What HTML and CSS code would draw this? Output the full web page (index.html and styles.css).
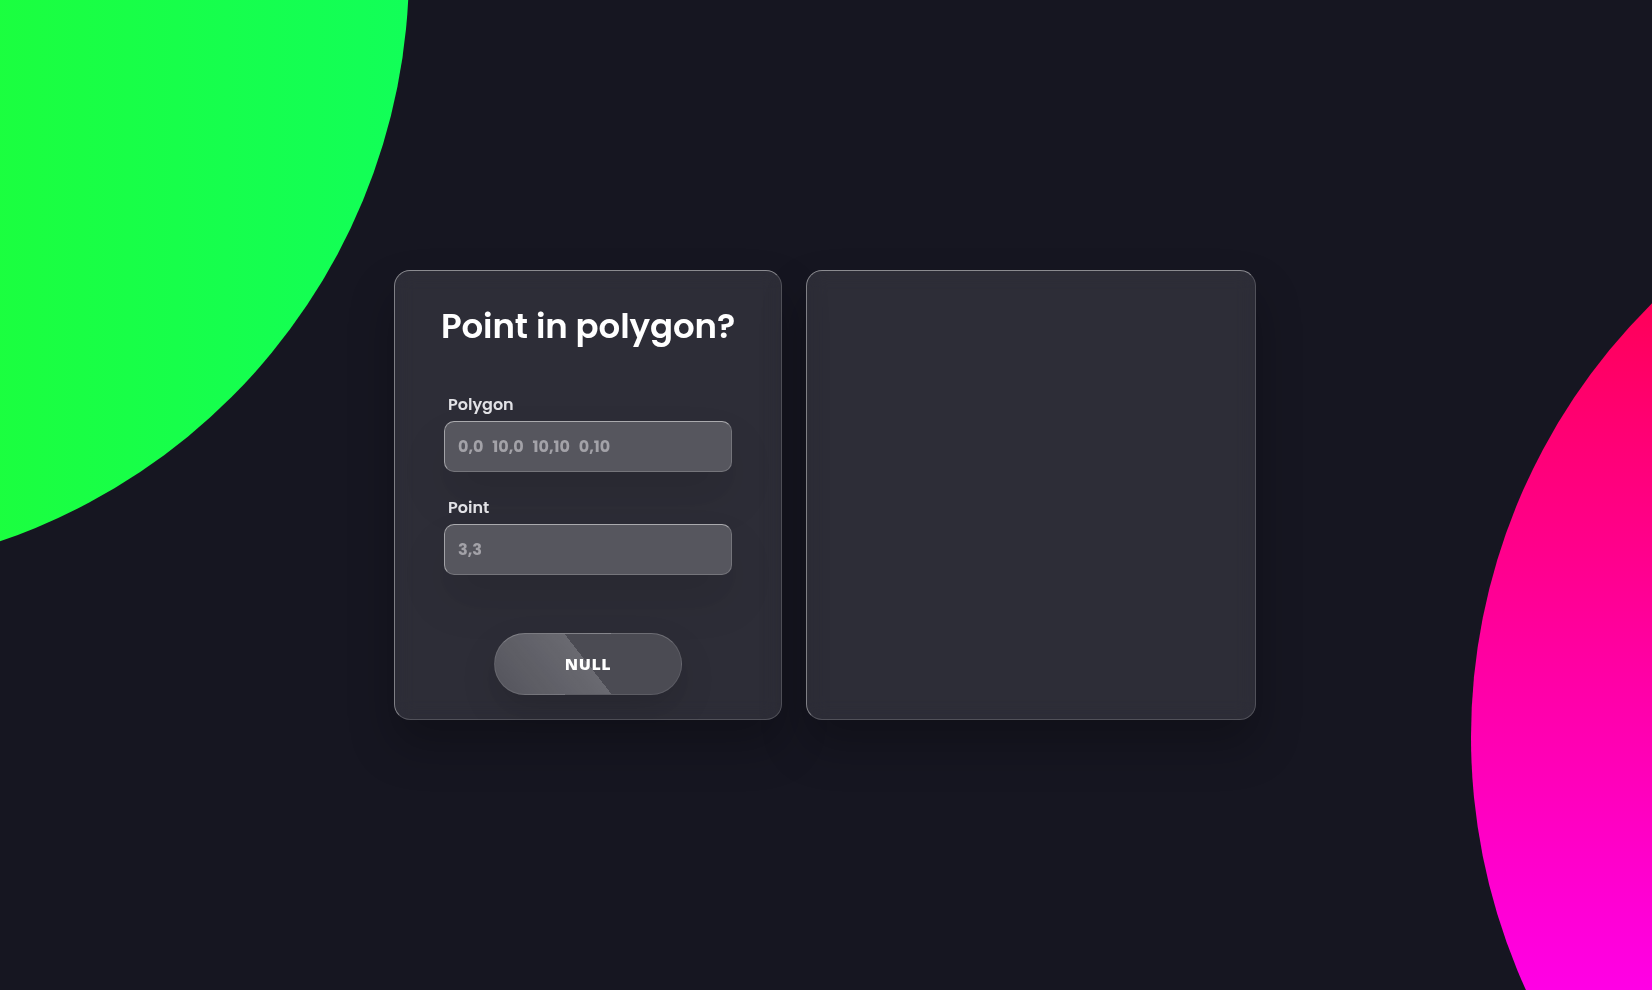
FILE: index.html
```html
<!DOCTYPE html>
<html lang="en">
<head>
<meta charset="utf-8">
<title>Point in polygon?</title>
<link rel="stylesheet" href="styles.css">
</head>
<body>
<div class="blob blob-green"></div>
<div class="blob blob-pink"></div>
<main class="stage">
  <section class="card form-card">
    <h1 class="title">Point in polygon?</h1>
    <div class="field">
      <label class="label" for="polygon">Polygon</label>
      <input class="input" id="polygon" type="text" placeholder="0,0  10,0  10,10  0,10">
    </div>
    <div class="field">
      <label class="label" for="point">Point</label>
      <input class="input" id="point" type="text" placeholder="3,3">
    </div>
    <button class="btn" type="button">NULL</button>
  </section>
  <section class="card canvas-card"></section>
</main>
</body>
</html>
```

FILE: styles.css
```css
* { box-sizing: border-box; }

html, body {
  margin: 0;
  height: 100%;
}

body {
  background: #161621;
  font-family: "Poppins", "Inter", "Noto Sans", sans-serif;
  overflow: hidden;
  position: relative;
  display: flex;
  align-items: center;
  justify-content: center;
}

.blob {
  position: absolute;
  border-radius: 50%;
  z-index: 0;
}

.blob-green {
  width: 1210px;
  height: 1210px;
  left: -801px;
  top: -636px;
  background: linear-gradient(to right, #2cff0f, #12ff58);
}

.blob-pink {
  width: 1220px;
  height: 1220px;
  left: 1471px;
  top: 127px;
  background: linear-gradient(to bottom, #ff0035 0%, #ff00ff 81%, #ff00ff 100%);
}

.stage {
  position: relative;
  z-index: 1;
  display: flex;
  gap: 24px;
  margin-left: -2px;
}

.card {
  height: 450px;
  border-radius: 16px;
  background: rgba(255, 255, 255, 0.1);
  border: 1px solid rgba(255, 255, 255, 0.18);
  border-top-color: rgba(255, 255, 255, 0.45);
  border-left-color: rgba(255, 255, 255, 0.4);
  box-shadow: 0 25px 45px rgba(0, 0, 0, 0.25);
  backdrop-filter: blur(10px);
}

.form-card {
  width: 388px;
  padding: 33px 0 24px;
  display: flex;
  flex-direction: column;
  align-items: center;
}

.canvas-card {
  width: 450px;
}

.title {
  margin: 0;
  font-size: 34px;
  line-height: 44px;
  font-weight: 600;
  color: #ffffff;
  letter-spacing: -0.1px;
}

.field {
  width: 288px;
  margin-top: 47px;
  display: flex;
  flex-direction: column;
}

.field + .field {
  margin-top: 26px;
}

.label {
  padding-left: 4px;
  font-size: 16px;
  line-height: 20px;
  font-weight: 600;
  color: #e2e2e6;
  margin-bottom: 6px;
}

.input {
  height: 51px;
  width: 100%;
  border-radius: 10px;
  border: 1px solid rgba(255, 255, 255, 0.18);
  border-top-color: rgba(255, 255, 255, 0.5);
  border-left-color: rgba(255, 255, 255, 0.45);
  background: rgba(255, 255, 255, 0.2);
  box-shadow: 0 25px 45px rgba(0, 0, 0, 0.12);
  padding: 0 13px;
  font-family: inherit;
  font-size: 16px;
  font-weight: 700;
  color: #ffffff;
  outline: none;
}

.input::placeholder {
  color: #a3a2a8;
  opacity: 1;
  font-weight: 700;
  word-spacing: 1px;
}

.btn {
  margin-top: 58px;
  width: 188px;
  height: 62px;
  border-radius: 31px;
  border: 1px solid rgba(255, 255, 255, 0.1);
  border-top-color: rgba(255, 255, 255, 0.2);
  background: linear-gradient(52deg, rgba(255, 255, 255, 0.19) 0%, rgba(255, 255, 255, 0.29) 50%, rgba(255, 255, 255, 0.14) 50%, rgba(255, 255, 255, 0.14) 100%);
  box-shadow: 0 15px 35px rgba(0, 0, 0, 0.15);
  font-family: "Open Sans", "Noto Sans", sans-serif;
  font-size: 16px;
  font-weight: 800;
  letter-spacing: 0.6px;
  color: #ffffff;
  cursor: pointer;
}
```
